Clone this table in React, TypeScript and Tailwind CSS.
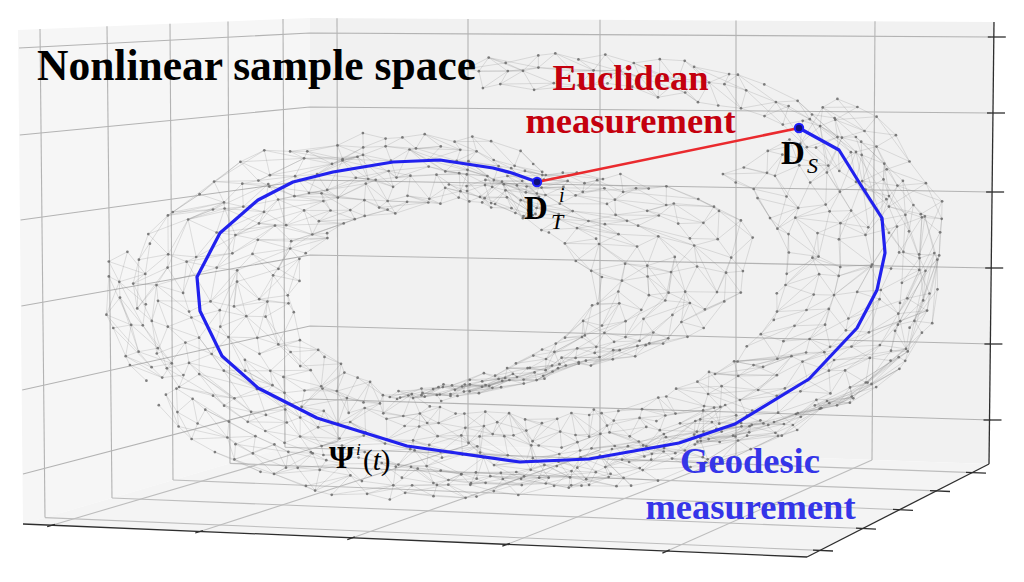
import React, { useMemo } from 'react';

type Pt = [number, number];

interface Band {
  strands: Pt[][];
  samples: number;
  jitter: number;
  seed: number;
}

const mulberry = (seed: number) => {
  let a = seed >>> 0;
  return () => {
    a = (a + 0x6d2b79f5) >>> 0;
    let t = a;
    t = Math.imul(t ^ (t >>> 15), t | 1);
    t ^= t + Math.imul(t ^ (t >>> 7), t | 61);
    return ((t ^ (t >>> 14)) >>> 0) / 4294967296;
  };
};

const catmull = (pts: Pt[], sub = 14): Pt[] => {
  const out: Pt[] = [];
  for (let i = 0; i < pts.length - 1; i++) {
    const p0 = pts[Math.max(i - 1, 0)];
    const p1 = pts[i];
    const p2 = pts[i + 1];
    const p3 = pts[Math.min(i + 2, pts.length - 1)];
    for (let k = 0; k < sub; k++) {
      const t = k / sub;
      const t2 = t * t;
      const t3 = t2 * t;
      const f = (a: number, b: number, c: number, d: number) =>
        0.5 * (2 * b + (-a + c) * t + (2 * a - 5 * b + 4 * c - d) * t2 + (-a + 3 * b - 3 * c + d) * t3);
      out.push([f(p0[0], p1[0], p2[0], p3[0]), f(p0[1], p1[1], p2[1], p3[1])]);
    }
  }
  out.push(pts[pts.length - 1]);
  return out;
};

// equal arc-length samples, each nudged a little along the curve
const resample = (poly: Pt[], n: number, rand: () => number): Pt[] => {
  const acc = [0];
  for (let i = 1; i < poly.length; i++) {
    acc.push(acc[i - 1] + Math.hypot(poly[i][0] - poly[i - 1][0], poly[i][1] - poly[i - 1][1]));
  }
  const total = acc[acc.length - 1];
  const step = total / (n - 1);
  const out: Pt[] = [];
  for (let i = 0; i < n; i++) {
    const nudge = i === 0 || i === n - 1 ? 0 : (rand() - 0.5) * step * 0.7;
    const target = Math.min(total, Math.max(0, step * i + nudge));
    let seg = 1;
    while (seg < poly.length - 1 && acc[seg] < target) seg++;
    const span = acc[seg] - acc[seg - 1] || 1;
    const u = (target - acc[seg - 1]) / span;
    out.push([
      poly[seg - 1][0] + (poly[seg][0] - poly[seg - 1][0]) * u,
      poly[seg - 1][1] + (poly[seg][1] - poly[seg - 1][1]) * u,
    ]);
  }
  return out;
};

// geodesic path, from D_T round the left side to D_S
const geodesic: Pt[] = [
  [537, 182], [512, 173], [493, 168], [440, 160], [393, 162], [333, 172], [293, 182], [258, 200],
  [220, 233], [197, 277], [200, 311], [222, 356], [258, 388], [317, 418], [407, 446], [520, 462],
  [589, 459], [679, 443], [735, 424], [809, 379], [857, 328], [877, 290], [885, 253], [882, 218],
  [862, 187], [839, 150], [799, 128],
];

const scaled = (pts: Pt[], s: number, dy = 0): Pt[] =>
  pts.map(([x, y]) => [540 + (x - 540) * s, 310 + (y - 310) * s + dy] as Pt);

const lerpPts = (a: Pt[], b: Pt[], t: number): Pt[] =>
  a.map((p, i) => [p[0] + (b[i][0] - p[0]) * t, p[1] + (b[i][1] - p[1]) * t] as Pt);

const crescentA: Pt[] = [
  [453, 187], [500, 205], [545, 230], [583, 260], [598, 285], [585, 318], [560, 340], [520, 362], [480, 378], [430, 390], [390, 396],
];
const crescentB: Pt[] = [
  [560, 170], [640, 182], [700, 200], [740, 225], [752, 252], [742, 285], [715, 315], [670, 340], [600, 362], [520, 382], [440, 398],
];

const bands: Band[] = [
  {
    strands: [0.72, 0.8, 0.88, 0.95, 1.03, 1.1, 1.17].map((s, i) => scaled(geodesic, s, (i % 2) * 3)),
    samples: 72,
    jitter: 6,
    seed: 11,
  },
  {
    strands: [
      [[470, 64], [540, 56], [620, 58], [690, 66], [765, 86], [825, 117], [875, 155], [910, 195], [932, 250], [935, 300], [918, 345], [885, 380], [840, 402], [780, 420], [720, 432]],
      [[478, 76], [550, 70], [630, 73], [700, 82], [770, 103], [828, 135], [872, 172], [905, 215], [920, 260], [918, 310], [900, 355], [865, 388], [815, 410], [760, 426], [705, 436]],
      [[485, 90], [560, 86], [640, 90], [710, 102], [775, 124], [830, 158], [868, 195], [895, 237], [905, 285], [898, 330], [878, 370], [840, 398], [790, 418], [735, 432], [690, 440]],
    ],
    samples: 38,
    jitter: 5,
    seed: 23,
  },
  {
    strands: [0, 0.17, 0.34, 0.5, 0.67, 0.84, 1].map((t) => lerpPts(crescentA, crescentB, t)),
    samples: 28,
    jitter: 5,
    seed: 37,
  },
  {
    strands: [
      [[157, 408], [233, 464], [290, 481], [343, 495], [443, 496], [512, 492], [580, 484], [640, 468], [700, 440], [740, 420]],
      [[165, 398], [240, 450], [300, 468], [360, 480], [450, 484], [520, 480], [590, 470], [650, 452], [700, 430], [735, 414]],
      [[175, 388], [250, 436], [310, 455], [370, 466], [455, 472], [525, 468], [595, 456], [650, 440], [695, 420], [725, 405]],
    ],
    samples: 28,
    jitter: 4,
    seed: 41,
  },
  {
    strands: [
      [[108, 265], [104, 300], [112, 335], [125, 362], [150, 385]],
      [[126, 255], [122, 295], [128, 330], [142, 362], [165, 380]],
      [[146, 248], [141, 290], [148, 325], [160, 358], [182, 372]],
    ],
    samples: 7,
    jitter: 5,
    seed: 53,
  },
];

const buildMesh = () => {
  const points: Pt[] = [];
  const edges: [number, number][] = [];
  bands.forEach((band) => {
    const rand = mulberry(band.seed);
    const grid = band.strands.map((s) => resample(catmull(s), band.samples, rand));
    const base = points.length;
    const idx = (s: number, j: number) => base + s * band.samples + j;
    grid.forEach((row) =>
      row.forEach(([x, y]) => {
        points.push([x + (rand() - 0.5) * 2 * band.jitter, y + (rand() - 0.5) * 2 * band.jitter]);
      })
    );
    const m = grid.length;
    const n = band.samples;
    for (let s = 0; s < m; s++) {
      for (let j = 0; j < n; j++) {
        if (j + 1 < n) edges.push([idx(s, j), idx(s, j + 1)]);
        if (j + 2 < n && rand() < 0.3) edges.push([idx(s, j), idx(s, j + 2)]);
        if (s + 1 < m) {
          if (rand() < 0.8) edges.push([idx(s, j), idx(s + 1, j)]);
          if (j + 1 < n) {
            if (rand() < 0.5) edges.push([idx(s, j), idx(s + 1, j + 1)]);
            else edges.push([idx(s, j + 1), idx(s + 1, j)]);
          }
          if (j + 2 < n && rand() < 0.3) edges.push([idx(s, j), idx(s + 1, j + 2)]);
        }
        if (s + 2 < m && j + 1 < n && rand() < 0.12) edges.push([idx(s, j), idx(s + 2, j + 1)]);
      }
    }
  });
  return { points, edges };
};

const f = (n: number) => n.toFixed(1);

const Axes: React.FC = () => {
  const zLeft = [48, 135, 220, 306, 390, 474];
  const zCorner = [33, 107, 180, 255, 326, 399];
  const zRight = [37, 113, 192, 268, 344, 420];
  const yTop = [40, 107, 170, 228, 283];
  const yBottom: Pt[] = [[45, 517.6], [112, 498], [173, 480], [230, 463.4], [285, 447.3]];
  const xTop = [337, 468, 600, 736, 875];
  const xBottom: Pt[] = [[338, 441], [468, 445], [600, 450], [736, 455], [872, 460]];
  const xFront: Pt[] = [[52, 525.2], [200, 531.5], [352, 537.9], [507, 544.4], [667, 551.1]];
  const yRight: Pt[] = [[820, 550.4], [863, 528.5], [900, 509.7], [937, 490.9], [973, 472.6]];
  const topLeftY = (x: number) => 30 - ((x - 18) / 292) * 12;
  const topBackY = (x: number) => 18 + ((x - 310) / 682) * 4;

  return (
    <g>
      <polygon points="18,30 310,18 310,440 23,524" fill="#f6f6f6" />
      <polygon points="310,18 994,22 989,464 310,440" fill="#f1f1f1" />
      <polygon points="23,524 310,440 989,464 807,557" fill="#f4f4f4" />

      <g stroke="#b3b3b3" strokeWidth={1.1} fill="none">
        {zLeft.map((y, i) => (
          <polyline key={`zl${i}`} points={`${19 + i * 0.8},${y} 310,${zCorner[i]} 991,${zRight[i]}`} />
        ))}
        {yTop.map((x, i) => (
          <line key={`yl${i}`} x1={x} y1={f(topLeftY(x))} x2={yBottom[i][0]} y2={yBottom[i][1]} />
        ))}
        {xTop.map((x, i) => (
          <line key={`xb${i}`} x1={x} y1={f(topBackY(x))} x2={xBottom[i][0]} y2={xBottom[i][1]} />
        ))}
      </g>
      <g stroke="#bdbdbd" strokeWidth={1.1} fill="none">
        {xFront.map((p, i) => (
          <line key={`xf${i}`} x1={p[0]} y1={p[1]} x2={xBottom[i][0]} y2={xBottom[i][1]} />
        ))}
        {yBottom.map((p, i) => (
          <line key={`yf${i}`} x1={p[0]} y1={p[1]} x2={yRight[i][0]} y2={yRight[i][1]} />
        ))}
      </g>

      <g stroke="#2e2e2e" strokeWidth={1.3} fill="none">
        <line x1={23} y1={524} x2={807} y2={557} />
        <line x1={807} y1={557} x2={989} y2={464} />
        <line x1={994} y1={22} x2={989} y2={464} />
        {xFront.map((p, i) => {
          const dx = xBottom[i][0] - p[0];
          const dy = xBottom[i][1] - p[1];
          const len = Math.hypot(dx, dy);
          return (
            <line
              key={`xt${i}`}
              x1={f(p[0] + (dx / len) * 3)}
              y1={f(p[1] + (dy / len) * 3)}
              x2={f(p[0] - (dx / len) * 5)}
              y2={f(p[1] - (dy / len) * 5)}
            />
          );
        })}
        {yRight.map((p, i) => (
          <line key={`yt${i}`} x1={p[0] - 7} y1={p[1] - 0.3} x2={p[0] + 13} y2={p[1] + 0.6} />
        ))}
        {zRight.map((y, i) => {
          const x = 994 - ((y - 22) / 442) * 5;
          return <line key={`zt${i}`} x1={f(x - 6)} y1={y} x2={f(x + 12)} y2={y} />;
        })}
      </g>
    </g>
  );
};

const App: React.FC = () => {
  const mesh = useMemo(buildMesh, []);
  const edgePath = mesh.edges
    .map(([a, b]) => `M${f(mesh.points[a][0])} ${f(mesh.points[a][1])}L${f(mesh.points[b][0])} ${f(mesh.points[b][1])}`)
    .join('');
  const geodesicLine = geodesic.map(([x, y]) => `${x},${y}`).join(' ');

  return (
    <div className="w-[1024px] h-[582px] bg-white overflow-hidden">
      <svg width={1024} height={582} viewBox="0 0 1024 582" className="block font-['Liberation_Serif','Times_New_Roman',serif]">
        <Axes />

        {/* manifold mesh */}
        <path d={edgePath} stroke="#8f8f8f" strokeWidth={0.55} strokeOpacity={0.48} fill="none" />
        <g fill="#6a6a6a" fillOpacity={0.85}>
          {mesh.points.map(([x, y], i) => (
            <circle key={i} cx={f(x)} cy={f(y)} r={1.35} />
          ))}
        </g>

        <polyline points={geodesicLine} fill="none" stroke="#2121ee" strokeWidth={3.2} strokeLinejoin="round" />
        <line x1={537} y1={182} x2={799} y2={128} stroke="#ea2a2e" strokeWidth={2.6} />
        <circle cx={537} cy={182} r={4.2} fill="#10107a" stroke="#1e1eff" strokeWidth={2} />
        <circle cx={799} cy={128} r={4.2} fill="#10107a" stroke="#1e1eff" strokeWidth={2} />

        <text x={37} y={80} fontSize={43.5} fontWeight={700} fill="#000">
          Nonlinear sample space
        </text>

        <g fontSize={36.5} fontWeight={700} textAnchor="middle">
          <text x={630.5} y={90} fill="#c4000e">Euclidean</text>
          <text x={630.5} y={133} fill="#c4000e">measurement</text>
          <text x={750} y={473} fill="#3535e8">Geodesic</text>
          <text x={750.5} y={519} fill="#3535e8">measurement</text>
        </g>

        <g fill="#000">
          <text x={781} y={164} fontSize={33} fontWeight={700}>D</text>
          <text x={807} y={173} fontSize={22} fontStyle="italic">S</text>

          <text x={524} y={219} fontSize={33} fontWeight={700}>D</text>
          <text x={551} y={229} fontSize={22} fontStyle="italic">T</text>
          <text x={559} y={202} fontSize={20} fontStyle="italic">i</text>

          <text x={329} y={468} fontSize={32} fontWeight={700}>Ψ</text>
          <text x={356} y={455} fontSize={17} fontStyle="italic">i</text>
          <text x={363} y={470} fontSize={29}>
            (<tspan fontStyle="italic">t</tspan>)
          </text>
        </g>
      </svg>
    </div>
  );
};

export default App;
